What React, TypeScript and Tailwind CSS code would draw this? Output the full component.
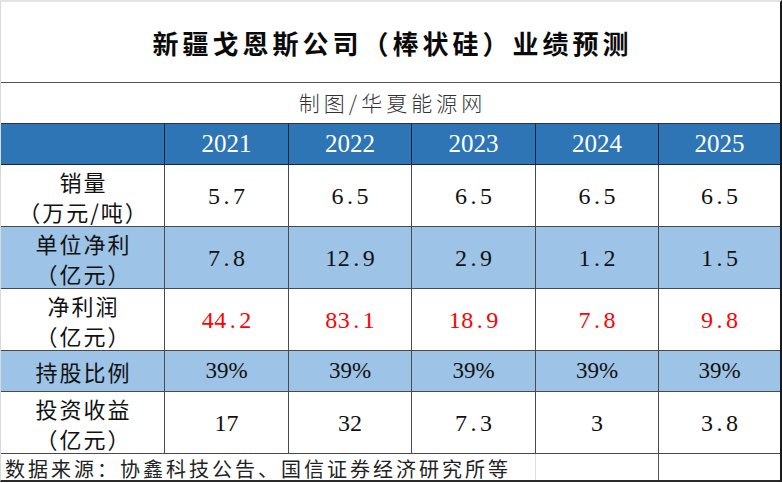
import React from "react";

const colW = [
  "w-[164px]",
  "w-[124px]",
  "w-[123px]",
  "w-[124px]",
  "w-[123px]",
  "w-[121px]",
];

const CJK = "font-['Noto_Sans_CJK_SC',sans-serif]";
const SERIF = "font-['Liberation_Serif','Times_New_Roman',serif]";

function Mono({ text, red }: { text: string; red?: boolean }) {
  return (
    <span className={`flex ${SERIF} text-[24px] ${red ? "text-[#ff0000]" : "text-[#111]"}`}>
      {text.split("").map((c, i) => (
        <span key={i} className="inline-block w-[12.5px] text-center">
          {c}
        </span>
      ))}
    </span>
  );
}

type Val = { t: string; kind: "mono" | "serif" | "pct"; red?: boolean };

type RowDef = {
  label: string[];
  h: string;
  bg?: string;
  vals: Val[];
};

const rows: RowDef[] = [
  {
    label: ["销量", "（万元/吨）"],
    h: "h-[62px]",
    vals: [
      { t: "5.7", kind: "mono" },
      { t: "6.5", kind: "mono" },
      { t: "6.5", kind: "mono" },
      { t: "6.5", kind: "mono" },
      { t: "6.5", kind: "mono" },
    ],
  },
  {
    label: ["单位净利", "（亿元）"],
    h: "h-[62px]",
    bg: "bg-[#9DC3E6]",
    vals: [
      { t: "7.8", kind: "mono" },
      { t: "12.9", kind: "mono" },
      { t: "2.9", kind: "mono" },
      { t: "1.2", kind: "mono" },
      { t: "1.5", kind: "mono" },
    ],
  },
  {
    label: ["净利润", "（亿元）"],
    h: "h-[62px]",
    vals: [
      { t: "44.2", kind: "mono", red: true },
      { t: "83.1", kind: "mono", red: true },
      { t: "18.9", kind: "mono", red: true },
      { t: "7.8", kind: "mono", red: true },
      { t: "9.8", kind: "mono", red: true },
    ],
  },
  {
    label: ["持股比例"],
    h: "h-[41px]",
    bg: "bg-[#9DC3E6]",
    vals: [
      { t: "39%", kind: "pct" },
      { t: "39%", kind: "pct" },
      { t: "39%", kind: "pct" },
      { t: "39%", kind: "pct" },
      { t: "39%", kind: "pct" },
    ],
  },
  {
    label: ["投资收益", "（亿元）"],
    h: "h-[62px]",
    vals: [
      { t: "17", kind: "serif" },
      { t: "32", kind: "serif" },
      { t: "7.3", kind: "mono" },
      { t: "3", kind: "serif" },
      { t: "3.8", kind: "mono" },
    ],
  },
];

function ValueCell({ v }: { v: Val }) {
  if (v.kind === "mono") return <Mono text={v.t} red={v.red} />;
  if (v.kind === "pct")
    return <span className={`${SERIF} text-[23px] text-[#111]`}>{v.t}</span>;
  return <span className={`${SERIF} text-[24px] text-[#111]`}>{v.t}</span>;
}

export default function App() {
  const years = ["2021", "2022", "2023", "2024", "2025"];
  return (
    <div className="w-[782px] h-[483px] bg-white">
      <div className="w-[782px] h-[482px] flex flex-col border-l border-l-[#d9d9d9] border-t-2 border-t-[#e3e3e3] border-r-2 border-r-[#1a1a1a] border-b-2 border-b-[#2a2a2a] bg-white">
        {/* Title */}
        <div className="h-[81px] shrink-0 flex items-center justify-center border-b border-b-[#555]">
          <span
            className={`${CJK} text-[26px] font-bold tracking-[4px] pl-[4px] text-[#0a0a0a]`}
          >
            新疆戈恩斯公司（棒状硅）业绩预测
          </span>
        </div>
        {/* Subtitle */}
        <div className="h-[41px] shrink-0 flex items-center justify-center border-b border-b-[#333]">
          <span
            className={`${CJK} text-[21px] tracking-[4px] pl-[4px] text-[#333] font-light`}
          >
            制图/华夏能源网
          </span>
        </div>
        {/* Header */}
        <div className="h-[41px] shrink-0 flex bg-[#2E75B6] border-b border-b-[#1c2633]">
          {["", ...years].map((y, i) => (
            <div
              key={i}
              className={`${colW[i]} h-full flex items-center justify-center ${
                i < 5 ? "border-r border-r-[#1c2633]" : ""
              }`}
            >
              <span className={`${SERIF} text-[25px] text-white`}>{y}</span>
            </div>
          ))}
        </div>
        {/* Body rows */}
        {rows.map((r, ri) => (
          <div
            key={ri}
            className={`${r.h} shrink-0 flex ${r.bg ?? "bg-white"} border-b border-b-[#4a4a4a]`}
          >
            <div
              className={`${colW[0]} h-full flex flex-col items-center justify-center border-r border-r-[#4a4a4a]`}
            >
              {r.label.map((l, li) => (
                <span
                  key={li}
                  className={`${CJK} text-[22px] leading-[30px] tracking-[2px] pl-[2px] text-[#111]`}
                >
                  {l}
                </span>
              ))}
            </div>
            {r.vals.map((v, vi) => (
              <div
                key={vi}
                className={`${colW[vi + 1]} h-full flex items-center justify-center ${
                  vi < 4 ? "border-r border-r-[#4a4a4a]" : ""
                }`}
              >
                <ValueCell v={v} />
              </div>
            ))}
          </div>
        ))}
        {/* Footer */}
        <div className="flex-1 flex">
          <div className="w-[535px] h-full flex items-center border-r border-r-[#dcdcdc]">
            <span
              className={`${CJK} text-[20px] leading-[20px] tracking-[3px] pl-[4px] pt-[3px] whitespace-nowrap text-[#222]`}
            >
              数据来源：协鑫科技公告、国信证券经济研究所等
            </span>
          </div>
          <div className="w-[123px] h-full border-r border-r-[#555]" />
          <div className="w-[121px] h-full" />
        </div>
      </div>
    </div>
  );
}
